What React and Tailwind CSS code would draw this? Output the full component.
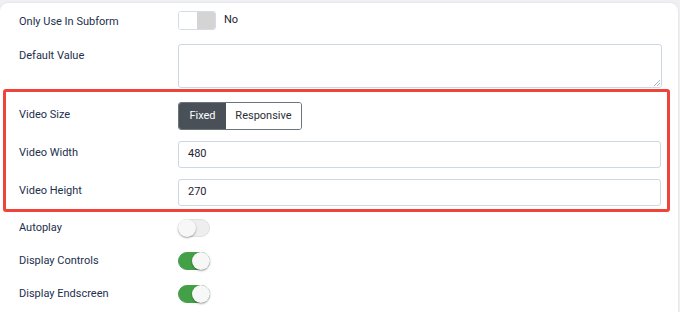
import React from 'react';

const labelCls = "w-[178px] shrink-0 pl-[19px] text-[11px] text-[#22304d]";

const Switch = ({ on }) => (
    <div
        className={
            "relative w-[32px] h-[18px] rounded-full border " +
            (on ? "bg-[#43a047] border-[#43a047]" : "bg-[#eeeeee] border-[#e0e0e0]")
        }
    >
        <div
            className={
                "absolute top-[-1px] w-[18px] h-[18px] rounded-full bg-[#f7f7f7] shadow-[0_1px_2px_rgba(0,0,0,0.35)] " +
                (on ? "right-[-1px]" : "left-[-1px]")
            }
        />
    </div>
);

const Row = ({ label, children, className = "", labelClass = "" }) => (
    <div className={"flex items-center " + className}>
        <div className={labelCls + " " + labelClass}>{label}</div>
        <div className="flex-1 flex items-center pr-[9px]">{children}</div>
    </div>
);

export default function App() {
    return (
        <div className="w-[680px] h-[312px] bg-[#eef0f3] pt-[3px] pr-[2px] overflow-hidden" style={{ fontFamily: 'Roboto, "Liberation Sans", sans-serif' }}>
            <div className="h-[320px] bg-white rounded-lg shadow-[0_0_2px_rgba(0,0,0,0.12)] pt-[8px]">
                {/* subform toggle */}
                <Row label="Only Use In Subform" className="h-[19px]" labelClass="pt-[3px]">
                    <div className="flex w-[38px] h-[19px] rounded-[3px] border border-[#d5dbe6] overflow-hidden">
                        <div className="flex-1 bg-white" />
                        <div className="flex-1 bg-[#d4d4d4]" />
                    </div>
                    <span className="ml-[8px] text-[11px] text-[#1f2430]">No</span>
                </Row>

                {/* default value */}
                <div className="flex mt-[14px]">
                    <div className={labelCls + " pt-[4px]"}>Default Value</div>
                    <div className="flex-1 pr-[16px]">
                        <div className="relative h-[44px] rounded-[3px] border border-[#cdd7e6] bg-white">
                            <svg className="absolute right-[1px] bottom-[1px]" width="6" height="6" viewBox="0 0 6 6">
                                <path d="M0 6 L6 0 M3 6 L6 3" stroke="#9aa3ad" strokeWidth="0.8" />
                            </svg>
                        </div>
                    </div>
                </div>

                {/* highlighted block */}
                <div className="ml-[3px] mr-[8px] mt-[1px] border-[3px] border-[#f0433a] rounded-[3px] pt-[10px] pb-[3px]">
                    <Row label="Video Size" className="h-[28px] -ml-[6px]" labelClass="pb-[2px]">
                        <div className="flex h-[28px] rounded-[3px] border border-[#6c757d] overflow-hidden text-[11px]">
                            <div className="w-[47px] bg-[#495057] text-white flex items-center justify-center">Fixed</div>
                            <div className="w-[75px] bg-white text-[#2b2f36] flex items-center justify-center">Responsive</div>
                        </div>
                    </Row>
                    <Row label="Video Width" className="h-[27px] mt-[11px] -ml-[6px]" labelClass="pb-[2px]">
                        <div className="flex-1 h-[27px] mr-[-3px] rounded-[3px] border border-[#cdd7e6] flex items-center pl-[9px] text-[11px] text-[#1f2430]">480</div>
                    </Row>
                    <Row label="Video Height" className="h-[27px] mt-[11px] -ml-[6px]" labelClass="pb-[2px]">
                        <div className="flex-1 h-[27px] mr-[-3px] rounded-[3px] border border-[#cdd7e6] flex items-center pl-[9px] text-[11px] text-[#1f2430]">270</div>
                    </Row>
                </div>

                {/* switches */}
                <Row label="Autoplay" className="h-[18px] mt-[7px]">
                    <Switch on={false} />
                </Row>
                <Row label="Display Controls" className="h-[18px] mt-[15px]">
                    <Switch on />
                </Row>
                <Row label="Display Endscreen" className="h-[18px] mt-[15px]">
                    <Switch on />
                </Row>
            </div>
        </div>
    );
}
